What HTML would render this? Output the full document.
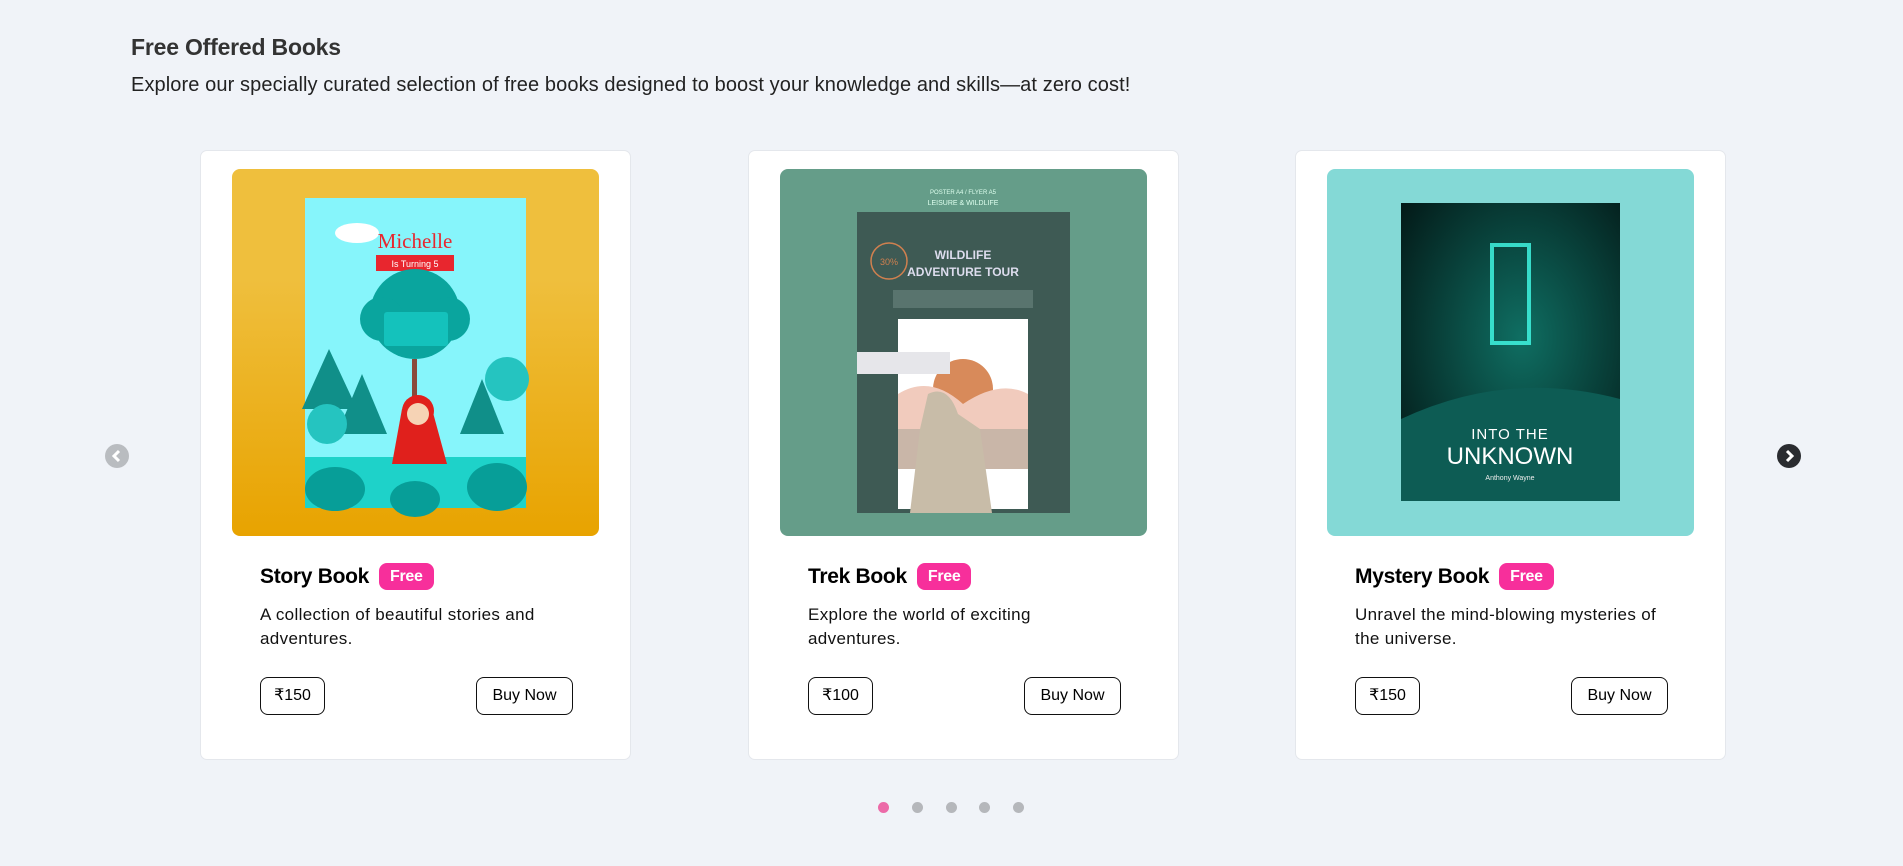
<!DOCTYPE html>
<html><head><meta charset="utf-8">
<style>
*{margin:0;padding:0;box-sizing:border-box}
body{width:1903px;height:866px;background:#f0f3f8;font-family:"Liberation Sans",sans-serif;position:relative;overflow:hidden;color:#000}
h1{position:absolute;left:131px;top:34px;font-size:23px;font-weight:bold;color:#333;letter-spacing:-0.2px}
.sub{position:absolute;left:131px;top:74px;font-size:20px;color:#222;letter-spacing:0.1px}
.card{position:absolute;top:150px;width:431px;height:610px;background:#fff;border:1px solid #e4e7ec;border-radius:7px}
.img{position:absolute;left:31px;top:18px;width:367px;height:367px;border-radius:8px;overflow:hidden}
.img svg{display:block}
.t{position:absolute;left:59px;top:412px;font-size:21px;font-weight:bold;display:flex;align-items:center;letter-spacing:-0.3px}
.badge{margin-left:10px;background:#f72f9b;color:#fff;font-size:16px;border-radius:8px;padding:3px 11px;height:27px;line-height:21px}
.d{position:absolute;left:59px;top:452px;width:318px;font-size:17px;line-height:24px;color:#111;letter-spacing:0.35px}
.btn{position:absolute;top:526px;height:38px;border:1px solid #111;border-radius:8px;font-size:16px;line-height:36px;text-align:center;background:#fff}
.p{left:59px;width:65px}
.b{left:275px;width:97px}
.arrow{position:absolute;top:444px;width:24px;height:24px;border-radius:50%}
.dot{position:absolute;top:802px;width:11px;height:11px;border-radius:50%;background:#b5b7bb}
</style></head><body>
<h1>Free Offered Books</h1>
<div class="sub">Explore our specially curated selection of free books designed to boost your knowledge and skills—at zero cost!</div>

<div class="arrow" style="left:105px;background:#b9bcc0"><svg width="24" height="24"><path d="M14 7 L9 12 L14 17" stroke="#fff" stroke-width="3" fill="none"/></svg></div>
<div class="arrow" style="left:1777px;background:#2a2c30"><svg width="24" height="24"><path d="M10 7 L15 12 L10 17" stroke="#fff" stroke-width="3" fill="none"/></svg></div>

<div class="card" style="left:200px">
 <div class="img"><svg width="367" height="367">
  <defs><linearGradient id="y" x1="0" y1="0" x2="0" y2="1"><stop offset="0.3" stop-color="#efbf3d"/><stop offset="1" stop-color="#e8a300"/></linearGradient></defs>
  <rect width="367" height="367" fill="url(#y)"/>
  <rect x="73" y="29" width="221" height="310" fill="#86f5fb"/>
  <ellipse cx="125" cy="64" rx="22" ry="10" fill="#fff"/>
  <text x="183" y="79" font-size="21" fill="#e8262e" text-anchor="middle" font-family="Liberation Serif">Michelle</text>
  <rect x="144" y="86" width="78" height="16" fill="#e8262e"/>
  <text x="183" y="98" font-size="9" fill="#fff" text-anchor="middle">Is Turning 5</text>
  <circle cx="183" cy="145" r="45" fill="#0aa59e"/><circle cx="150" cy="150" r="22" fill="#0aa59e"/><circle cx="216" cy="150" r="22" fill="#0aa59e"/>
  <rect x="152" y="143" width="64" height="34" rx="3" fill="#14c2bc"/>
  <rect x="180" y="190" width="5" height="40" fill="#8a4a3a"/>
  <path d="M97 180 L125 240 L70 240Z M130 205 L155 265 L105 265Z M250 210 L272 265 L228 265Z" fill="#108f89"/>
  <circle cx="95" cy="255" r="20" fill="#25c4c0"/><circle cx="275" cy="210" r="22" fill="#25c4c0"/>
  <rect x="73" y="288" width="221" height="51" fill="#1ed2c9"/>
  <ellipse cx="103" cy="320" rx="30" ry="22" fill="#079e98"/><ellipse cx="183" cy="330" rx="25" ry="18" fill="#079e98"/><ellipse cx="265" cy="318" rx="30" ry="24" fill="#079e98"/>
  <path d="M170 240 L200 240 L215 295 L160 295Z" fill="#e0201c"/>
  <circle cx="186" cy="242" r="16" fill="#e0201c"/><circle cx="186" cy="245" r="11" fill="#f6d3b5"/>
 </svg></div>
 <div class="t">Story Book<span class="badge">Free</span></div>
 <div class="d">A collection of beautiful stories and adventures.</div>
 <div class="btn p">₹150</div><div class="btn b">Buy Now</div>
</div>

<div class="card" style="left:748px">
 <div class="img"><svg width="367" height="367">
  <rect width="367" height="367" fill="#659d89"/>
  <text x="183" y="25" font-size="6" fill="#dfe" text-anchor="middle">POSTER A4 / FLYER A5</text>
  <text x="183" y="36" font-size="7" fill="#dfe" text-anchor="middle">LEISURE &amp; WILDLIFE</text>
  <rect x="77" y="43" width="213" height="301" fill="#3e5a54"/>
  <circle cx="109" cy="92" r="18" fill="none" stroke="#d0804f" stroke-width="1.5"/>
  <text x="109" y="96" font-size="9" fill="#d0804f" text-anchor="middle">30%</text>
  <text x="183" y="90" font-size="12" fill="#dde" text-anchor="middle" font-weight="bold">WILDLIFE</text>
  <text x="183" y="107" font-size="12" fill="#dde" text-anchor="middle" font-weight="bold">ADVENTURE TOUR</text>
  <rect x="113" y="121" width="140" height="18" fill="#6d8680" opacity="0.6"/>
  <rect x="118" y="150" width="130" height="190" fill="#fff"/>
  <circle cx="183" cy="220" r="30" fill="#d88a5a"/>
  <path d="M118 225 Q150 205 183 235 Q220 210 248 225 L248 270 L118 270Z" fill="#f1cbbd"/>
  <path d="M118 260 L248 260 L248 300 L118 300Z" fill="#c9b6a8"/>
  <path d="M77 183 L170 183 L170 205 L77 205Z" fill="#e6e6ea"/>
  <path d="M148 225 Q168 215 178 245 L200 260 L212 344 L130 344 L140 260Z" fill="#c8bca8"/>
 </svg></div>
 <div class="t">Trek Book<span class="badge">Free</span></div>
 <div class="d">Explore the world of exciting adventures.</div>
 <div class="btn p">₹100</div><div class="btn b">Buy Now</div>
</div>

<div class="card" style="left:1295px">
 <div class="img"><svg width="367" height="367">
  <defs><radialGradient id="g" cx="0.55" cy="0.45" r="0.7"><stop offset="0" stop-color="#0f6e62"/><stop offset="1" stop-color="#031a18"/></radialGradient></defs>
  <rect width="367" height="367" fill="#84d9d6"/>
  <rect x="74" y="34" width="219" height="298" fill="url(#g)"/>
  <path d="M74 250 Q180 200 293 230 L293 332 L74 332Z" fill="#0d5c54"/>
  <rect x="165" y="76" width="37" height="98" fill="none" stroke="#3ff5e0" stroke-width="4" opacity="0.85"/>
  <text x="183" y="270" font-size="15" fill="#fff" text-anchor="middle" letter-spacing="1">INTO THE</text>
  <text x="183" y="295" font-size="24" fill="#fff" text-anchor="middle">UNKNOWN</text>
  <text x="183" y="311" font-size="7" fill="#eee" text-anchor="middle">Anthony Wayne</text>
 </svg></div>
 <div class="t">Mystery Book<span class="badge">Free</span></div>
 <div class="d">Unravel the mind-blowing mysteries of the universe.</div>
 <div class="btn p">₹150</div><div class="btn b">Buy Now</div>
</div>

<div class="dot" style="left:878px;background:#ec6aa8"></div>
<div class="dot" style="left:912px"></div>
<div class="dot" style="left:946px"></div>
<div class="dot" style="left:979px"></div>
<div class="dot" style="left:1013px"></div>
</body></html>
